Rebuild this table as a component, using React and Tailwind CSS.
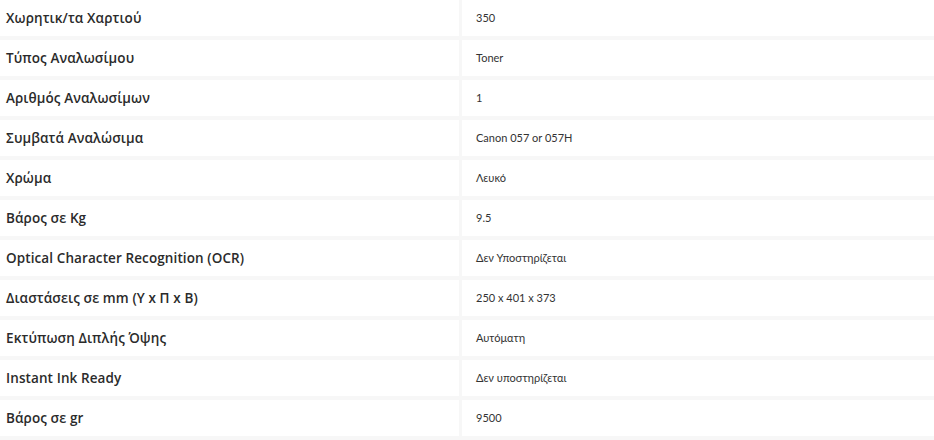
const specs = [
  ['Χωρητικ/τα Χαρτιού', '350'],
  ['Τύπος Αναλωσίμου', 'Toner'],
  ['Αριθμός Αναλωσίμων', '1'],
  ['Συμβατά Αναλώσιμα', 'Canon 057 or 057H'],
  ['Χρώμα', 'Λευκό'],
  ['Βάρος σε Kg', '9.5'],
  ['Optical Character Recognition (OCR)', 'Δεν Υποστηρίζεται'],
  ['Διαστάσεις σε mm (Υ x Π x Β)', '250 x 401 x 373'],
  ['Εκτύπωση Διπλής Όψης', 'Αυτόματη'],
  ['Instant Ink Ready', 'Δεν υποστηρίζεται'],
  ['Βάρος σε gr', '9500'],
];

const App = () => {
  return (
    <div className="w-[934px] h-[440px] overflow-hidden bg-white font-['Lato',sans-serif] text-[#222]">
      <div className="flex flex-col gap-[4px] bg-[#f7f7f7]">
        {specs.map(([label, value]) => (
          <div key={label} className="flex h-[36px] bg-white">
            <div className="w-[459px] flex items-center pl-[6px] font-['Open_Sans',sans-serif] text-[13.5px] tracking-[0.1px] font-semibold text-[#2b2b2b]">
              {label}
            </div>
            <div className="w-[3px] bg-[#f7f7f7]" />
            <div className="flex-1 flex items-center pl-[14px] text-[11px] text-[#333]">
              {value}
            </div>
          </div>
        ))}
        <div className="h-[5px] bg-gradient-to-b from-[#f3f3f3] to-[#e4e4e4]" />
      </div>
    </div>
  );
};

export default App;
